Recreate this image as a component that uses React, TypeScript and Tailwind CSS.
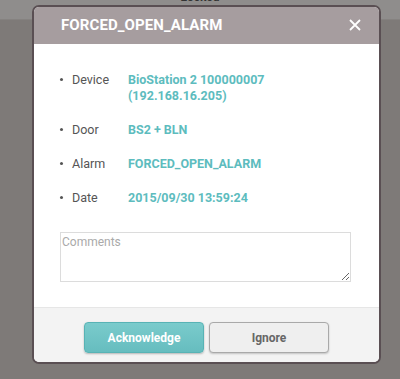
import React from "react";

export default function App() {
  const rows: { label: string; value: React.ReactNode }[] = [
    { label: "Device", value: <>BioStation 2 100000007<br />(192.168.16.205)</> },
    { label: "Door", value: "BS2 + BLN" },
    { label: "Alarm", value: "FORCED_OPEN_ALARM" },
    { label: "Date", value: "2015/09/30 13:59:24" },
  ];
  return (
    <div
      className="relative w-[400px] h-[379px] overflow-hidden bg-[#7e7a78]"
      style={{ fontFamily: "Roboto, 'Liberation Sans', sans-serif" }}
    >
      <div className="h-[20px] bg-[#8f8d8c] border-b border-[#858280] flex justify-center">
        <span className="text-[12px] leading-none text-[#333] -mt-[9px] font-bold">Locked</span>
      </div>
      <div className="absolute left-[32px] top-[5px] w-[349px] h-[359px] rounded-[7px] border-2 border-[#5a4f53] overflow-hidden flex flex-col bg-white">
        <div className="h-[37px] bg-[#a69d9f] flex items-center justify-between pl-[27px] pr-[18px]">
          <span className="text-white font-bold text-[15px] tracking-[0.1px]">FORCED_OPEN_ALARM</span>
          <svg width="12" height="12" viewBox="0 0 12 12" className="mt-[-2px]">
            <path d="M1 1 L11 11 M11 1 L1 11" stroke="white" strokeWidth="1.8" />
          </svg>
        </div>
        <div className="flex-1 bg-white pl-[26px] pr-[27px] pt-[28px]">
          <div className="flex flex-col gap-[18px]">
            {rows.map((r) => (
              <div key={r.label} className="flex text-[12.5px] leading-[16px]">
                <span className="w-[12px] flex items-start pt-[6px]">
                  <span className="block w-[3px] h-[3px] rounded-full bg-[#555]" />
                </span>
                <span className="w-[56px] text-[#555]">{r.label}</span>
                <span className="text-[#5dbcbe] font-bold">{r.value}</span>
              </div>
            ))}
          </div>
          <textarea
            placeholder="Comments"
            className="mt-[26px] block w-[291px] h-[50px] border border-[#dcdcdc] text-[12px] px-[1px] py-0 placeholder:text-[#aaa] resize-y"
          />
        </div>
        <div className="h-[55px] bg-[#f3f3f3] border-t border-[#e6e6e6] flex justify-center items-start pt-[14px] gap-[5px]">
          <button className="w-[120px] h-[31px] rounded-[4px] bg-gradient-to-b from-[#7acbcc] to-[#66bdbf] border border-[#58b3b5] text-white font-bold text-[12px] shadow-[0_1px_2px_rgba(0,0,0,0.25)]">
            Acknowledge
          </button>
          <button className="w-[120px] h-[31px] rounded-[4px] bg-[#efefef] border border-[#a9a9a9] text-[#666] font-bold text-[12px] shadow-[0_1px_2px_rgba(0,0,0,0.2)]">
            Ignore
          </button>
        </div>
      </div>
    </div>
  );
}
